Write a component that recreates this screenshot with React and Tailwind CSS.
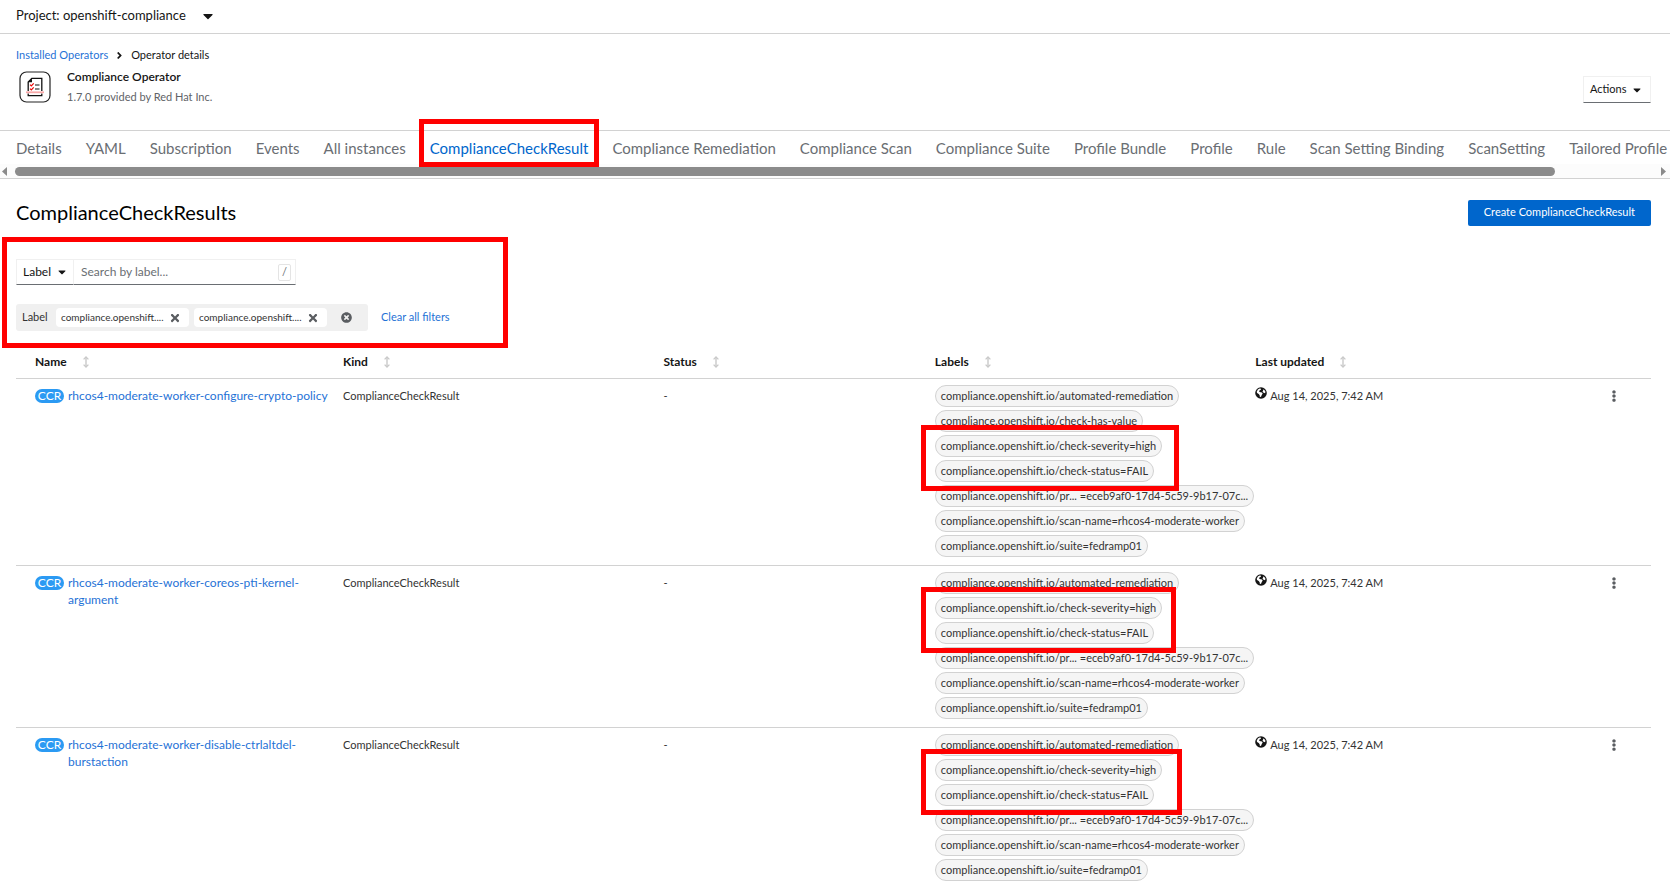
import { FaCaretDown, FaAngleRight, FaTimes, FaTimesCircle, FaEllipsisV } from "react-icons/fa";

const TABS = [
  "Details",
  "YAML",
  "Subscription",
  "Events",
  "All instances",
  "ComplianceCheckResult",
  "Compliance Remediation",
  "Compliance Scan",
  "Compliance Suite",
  "Profile Bundle",
  "Profile",
  "Rule",
  "Scan Setting Binding",
  "ScanSetting",
  "Tailored Profile",
];

const COLUMNS = [
  { title: "Name", width: "w-[20%] pl-[19px]" },
  { title: "Kind", width: "w-[19.6%]" },
  { title: "Status", width: "w-[16.6%]" },
  { title: "Labels", width: "w-[19.6%]" },
  { title: "Last updated", width: "w-[21.6%]" },
];

const PREFIX = "compliance.openshift.io/";
const HIGHLIGHTED = [PREFIX + "check-severity=high", PREFIX + "check-status=FAIL"];
const TAIL = [
  PREFIX + "pr... =eceb9af0-17d4-5c59-9b17-07c...",
  PREFIX + "scan-name=rhcos4-moderate-worker",
  PREFIX + "suite=fedramp01",
];

const ROWS = [
  {
    name: "rhcos4-moderate-worker-configure-crypto-policy",
    head: [PREFIX + "automated-remediation", PREFIX + "check-has-value"],
    box: "w-[258px]",
  },
  {
    name: "rhcos4-moderate-worker-coreos-pti-kernel-argument",
    head: [PREFIX + "automated-remediation"],
    box: "w-[255px]",
  },
  {
    name: "rhcos4-moderate-worker-disable-ctrlaltdel-burstaction",
    head: [PREFIX + "automated-remediation"],
    box: "w-[261px]",
  },
];

function Logo() {
  return (
    <svg viewBox="0 0 32 32" className="size-8 shrink-0" fill="none" aria-hidden="true">
      <rect x="1" y="1" width="30" height="30" rx="6.5" stroke="#222" strokeWidth="1.2" />
      <path d="M9.2 20V11l3.6-3.6h10V20M9.2 22.5v2.2h13.6v-2.2" stroke="#111" strokeWidth="1.3" />
      <path d="M9 11.2h4V7.4z" fill="#111" />
      <path d="M16 14h4.5M16 18h4.5" stroke="#111" strokeWidth="1.1" />
      <path d="m11 13.6 1.3 1.3 2.4-2.6M11 17.6l1.3 1.3 2.4-2.6" stroke="#e00" strokeWidth="1.2" />
      <path d="M7 21.3h18" stroke="#f9a8a8" strokeWidth="1.8" />
    </svg>
  );
}

function Globe() {
  return (
    <svg viewBox="0 0 496 512" className="size-3 shrink-0 text-[#151515]" fill="currentColor" aria-hidden="true">
      <circle cx="248" cy="256" r="248" />
      <path
        fill="#fff"
        d="M190 60l60 10-10 50-60 30-10 50 60 20 60 10 30 50-40 60-30 80-50 10-10-80-40-50-70-40-15-60 50-90zM330 110l60 20 50 70-20 70-60-20-50-50 30-40z"
      />
    </svg>
  );
}

function SortIcon() {
  return (
    <svg viewBox="0 0 6 12" className="h-3 w-[6px] text-[#c9c9c9]" fill="none" stroke="currentColor" aria-hidden="true">
      <path d="M3 1v10" strokeWidth="1.4" />
      <path d="M.6 3.4 3 1l2.4 2.4M.6 8.6 3 11l2.4-2.4" strokeWidth="1.3" />
    </svg>
  );
}

function Pill({ text }) {
  return (
    <a
      href="#label"
      className="flex h-[22px] items-center whitespace-nowrap rounded-full border border-[#d2d2d2] bg-[#f5f5f5] px-[5px] text-[11px] text-[#333]"
    >
      {text}
    </a>
  );
}

function Chip() {
  return (
    <li className="flex h-[19px] w-[133px] items-center justify-between rounded-sm bg-white pl-[5px] pr-2">
      <span className="text-[10px] text-[#333]">compliance.openshift....</span>
      <button type="button" aria-label="Remove filter" className="text-[#5a5d61]">
        <FaTimes className="size-3" />
      </button>
    </li>
  );
}

export default function App() {
  return (
    <div className="bg-white pr-[2px] font-['Lato','Noto_Sans',sans-serif] text-[11px] text-[#151515]">
      <header className="flex h-[34px] items-center border-b border-[#d2d2d2] px-4 pb-[2px]">
        <button type="button" className="flex items-center gap-[14px] text-[13px]">
          Project: openshift-compliance
          <FaCaretDown className="size-4" />
        </button>
      </header>

      <section className="pl-4 pr-[19px]">
        <nav aria-label="Breadcrumb" className="flex items-center gap-[6px] pt-[13px] leading-4">
          <a href="#operators" className="text-[#1f72d6]">
            Installed Operators
          </a>
          <FaAngleRight className="size-[11px]" />
          <span>Operator details</span>
        </nav>
        <div className="flex items-start justify-between pb-[22px] pt-[5px]">
          <div className="flex items-start gap-4 pl-[3px]">
            <div className="pt-[3px]">
              <Logo />
            </div>
            <div>
              <h1 className="text-[12px] font-semibold leading-[18px]">Compliance Operator</h1>
              <p className="leading-[22px] text-[#5f6367]">1.7.0 provided by Red Hat Inc.</p>
            </div>
          </div>
          <button
            type="button"
            className="mt-[8px] flex h-[27px] w-[68px] items-center justify-between border border-[#f0f0f0] border-b-[#6a6e73] pl-[6px] pr-[7px]"
          >
            Actions
            <FaCaretDown className="size-3" />
          </button>
        </div>
      </section>

      <div className="border-y border-[#d2d2d2]">
        <div className="relative">
          <nav
            aria-label="Operator sections"
            className="-mt-4 flex h-[49px] items-center gap-6 overflow-hidden whitespace-nowrap pl-4 pt-4 text-[15px] leading-[22px]"
          >
            {TABS.map((tab) =>
              tab === "ComplianceCheckResult" ? (
                <a key={tab} href="#tab" aria-current="page" className="text-[#06c]">
                  {tab}
                </a>
              ) : (
                <a key={tab} href="#tab" className="text-[#6a6e73]">
                  {tab}
                </a>
              ),
            )}
          </nav>
          <div
            aria-hidden="true"
            className="pointer-events-none absolute -bottom-[3px] left-[419px] z-10 h-12 w-[180px] border-[5px] border-[#f00]"
          />
        </div>
        <div className="flex h-[14px] items-center gap-[8px] bg-[#fcfcfc] pl-[2px] pr-1">
          <svg viewBox="0 0 5 9" className="h-[9px] w-[5px]" fill="#8b8b8b" aria-hidden="true">
            <path d="M5 0v9L0 4.5z" />
          </svg>
          <div className="flex-1">
            <div className="h-[9px] w-[94%] rounded-full bg-[#8b8b8b]" />
          </div>
          <svg viewBox="0 0 5 9" className="h-[9px] w-[5px]" fill="#8b8b8b" aria-hidden="true">
            <path d="M0 0v9l5-4.5z" />
          </svg>
        </div>
      </div>

      <main className="pl-4 pr-[19px]">
        <div className="flex items-center justify-between pt-[20px]">
          <h2 className="text-[20px] leading-[27px] text-black">ComplianceCheckResults</h2>
          <button type="button" className="h-[26px] rounded-[2px] bg-[#06c] px-4 text-[11px] text-white">
            Create ComplianceCheckResult
          </button>
        </div>

        <div className="relative pt-[33px]">
          <div
            aria-hidden="true"
            className="pointer-events-none absolute -left-[14px] top-[11px] h-[111px] w-[506px] border-[5px] border-[#f00]"
          />
          <div className="flex w-[280px] items-center">
            <div className="relative flex h-[26px] w-[58px] items-center border border-[#f0f0f0] border-b-[#6a6e73]">
              <select aria-label="Filter by" className="size-full appearance-none bg-transparent pl-[6px] text-[12px] outline-none">
                <option>Label</option>
                <option>Name</option>
              </select>
              <FaCaretDown className="pointer-events-none absolute right-[5px] size-3" />
            </div>
            <div className="flex h-[26px] min-w-0 flex-1 items-center border border-l-0 border-[#f0f0f0] border-b-[#6a6e73] pr-[4px]">
              <input
                type="text"
                aria-label="Search by label"
                placeholder="Search by label..."
                className="min-w-0 flex-1 pl-[7px] text-[12px] outline-none placeholder:text-[#6a6e73]"
              />
              <kbd className="flex h-[17px] w-[13px] items-center justify-center rounded-[2px] border border-[#e4e4e4] font-['Lato',sans-serif] text-[#6a6e73]">
                /
              </kbd>
            </div>
          </div>

          <div className="mt-[19px] flex items-center gap-[13px]">
            <div className="flex h-[27px] w-[352px] items-center rounded-[3px] bg-[#f0f0f0] pl-[6px] pr-4">
              <span className="w-[34px] text-[#333]">Label</span>
              <ul className="flex gap-[5px]">
                <Chip />
                <Chip />
              </ul>
              <button type="button" aria-label="Clear label filters" className="ml-auto text-[#5a5d61]">
                <FaTimesCircle className="size-[11px]" />
              </button>
            </div>
            <button type="button" className="text-[#1f72d6]">
              Clear all filters
            </button>
          </div>
        </div>

        <table className="mt-[16px] w-full table-fixed border-collapse text-left">
          <thead>
            <tr className="h-[31px] border-b border-[#d2d2d2]">
              {COLUMNS.map((column) => (
                <th key={column.title} scope="col" className={column.width + " py-0 pr-0 text-[12px] font-bold"}>
                  <button type="button" className="flex items-center gap-4">
                    {column.title}
                    <SortIcon />
                  </button>
                </th>
              ))}
              <td />
            </tr>
          </thead>
          <tbody>
            {ROWS.map((row) => (
              <tr key={row.name} className="border-b border-[#d2d2d2] align-top leading-[17px]">
                <td className="pb-2 pl-[19px] pt-[8px]">
                  <div className="flex items-start gap-1">
                    <span className="mt-[2px] flex h-[14px] w-[29px] shrink-0 items-center justify-center rounded-full bg-[#2b9af3] text-[12px] text-white">
                      CCR
                    </span>
                    <a href="#result" className="w-[262px] text-[12px] text-[#1f72d6]">
                      {row.name}
                    </a>
                  </div>
                </td>
                <td className="pt-[8px] text-[#333]">ComplianceCheckResult</td>
                <td className="pt-[8px] text-[#333]">-</td>
                <td className="pb-[8px] pt-[6px]">
                  <div className="flex flex-col items-start gap-[3px]">
                    {row.head.map((text) => (
                      <Pill key={text} text={text} />
                    ))}
                    <div className="relative flex flex-col items-start gap-[3px]">
                      {HIGHLIGHTED.map((text) => (
                        <Pill key={text} text={text} />
                      ))}
                      <div
                        aria-hidden="true"
                        className={row.box + " pointer-events-none absolute -left-[14px] -top-[10px] z-10 h-[66px] border-[5px] border-[#f00]"}
                      />
                    </div>
                    {TAIL.map((text) => (
                      <Pill key={text} text={text} />
                    ))}
                  </div>
                </td>
                <td className="pt-[8px] text-[#333]">
                  <div className="flex items-start gap-[3px]">
                    <Globe />
                    <time dateTime="2025-08-14T07:42">Aug 14, 2025, 7:42 AM</time>
                  </div>
                </td>
                <td className="pr-[33px] pt-[11px]">
                  <button type="button" aria-label="Row actions" className="ml-auto block text-[#5a5d61]">
                    <FaEllipsisV className="size-3" />
                  </button>
                </td>
              </tr>
            ))}
          </tbody>
        </table>
      </main>
    </div>
  );
}
